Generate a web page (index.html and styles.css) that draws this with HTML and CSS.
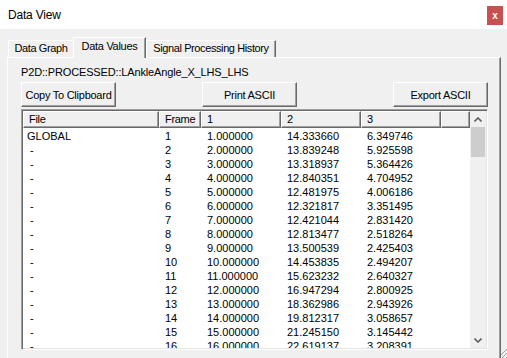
FILE: index.html
```html
<!DOCTYPE html>
<html lang="en">
<head>
    <meta charset="UTF-8">
    <title>Data View</title>
    <link rel="stylesheet" href="styles.css">
</head>
<body>
    <div class="window">
        <div class="titlebar">
            <span class="title">Data View</span>
            <span class="close">x</span>
        </div>
        <div class="client">
            <div class="tabs">
                <div class="tab tab-graph">Data Graph</div>
                <div class="tab tab-values active">Data Values</div>
                <div class="tab tab-history">Signal Processing History</div>
            </div>
            <div class="panel">
                <div class="channel">P2D::PROCESSED::LAnkleAngle_X_LHS_LHS</div>
                <div class="actions">
                    <button class="btn">Copy To Clipboard</button>
                    <button class="btn btn-print">Print ASCII</button>
                    <button class="btn btn-export">Export ASCII</button>
                </div>
                <div class="list">
                    <div class="list-main">
                        <div class="list-head">
                            <div class="head-cell">File</div>
                            <div class="head-cell">Frame</div>
                            <div class="head-cell">1</div>
                            <div class="head-cell">2</div>
                            <div class="head-cell">3</div>
                            <div class="head-cell"></div>
                        </div>
                        <div class="list-body">
                            <div class="row"><span class="cell cell-file">GLOBAL</span><span class="cell">1</span><span class="cell">1.000000</span><span class="cell">14.333660</span><span class="cell">6.349746</span></div>
                            <div class="row"><span class="cell cell-file">&nbsp;-</span><span class="cell">2</span><span class="cell">2.000000</span><span class="cell">13.839248</span><span class="cell">5.925598</span></div>
                            <div class="row"><span class="cell cell-file">&nbsp;-</span><span class="cell">3</span><span class="cell">3.000000</span><span class="cell">13.318937</span><span class="cell">5.364426</span></div>
                            <div class="row"><span class="cell cell-file">&nbsp;-</span><span class="cell">4</span><span class="cell">4.000000</span><span class="cell">12.840351</span><span class="cell">4.704952</span></div>
                            <div class="row"><span class="cell cell-file">&nbsp;-</span><span class="cell">5</span><span class="cell">5.000000</span><span class="cell">12.481975</span><span class="cell">4.006186</span></div>
                            <div class="row"><span class="cell cell-file">&nbsp;-</span><span class="cell">6</span><span class="cell">6.000000</span><span class="cell">12.321817</span><span class="cell">3.351495</span></div>
                            <div class="row"><span class="cell cell-file">&nbsp;-</span><span class="cell">7</span><span class="cell">7.000000</span><span class="cell">12.421044</span><span class="cell">2.831420</span></div>
                            <div class="row"><span class="cell cell-file">&nbsp;-</span><span class="cell">8</span><span class="cell">8.000000</span><span class="cell">12.813477</span><span class="cell">2.518264</span></div>
                            <div class="row"><span class="cell cell-file">&nbsp;-</span><span class="cell">9</span><span class="cell">9.000000</span><span class="cell">13.500539</span><span class="cell">2.425403</span></div>
                            <div class="row"><span class="cell cell-file">&nbsp;-</span><span class="cell">10</span><span class="cell">10.000000</span><span class="cell">14.453835</span><span class="cell">2.494207</span></div>
                            <div class="row"><span class="cell cell-file">&nbsp;-</span><span class="cell">11</span><span class="cell">11.000000</span><span class="cell">15.623232</span><span class="cell">2.640327</span></div>
                            <div class="row"><span class="cell cell-file">&nbsp;-</span><span class="cell">12</span><span class="cell">12.000000</span><span class="cell">16.947294</span><span class="cell">2.800925</span></div>
                            <div class="row"><span class="cell cell-file">&nbsp;-</span><span class="cell">13</span><span class="cell">13.000000</span><span class="cell">18.362986</span><span class="cell">2.943926</span></div>
                            <div class="row"><span class="cell cell-file">&nbsp;-</span><span class="cell">14</span><span class="cell">14.000000</span><span class="cell">19.812317</span><span class="cell">3.058657</span></div>
                            <div class="row"><span class="cell cell-file">&nbsp;-</span><span class="cell">15</span><span class="cell">15.000000</span><span class="cell">21.245150</span><span class="cell">3.145442</span></div>
                            <div class="row"><span class="cell cell-file">&nbsp;-</span><span class="cell">16</span><span class="cell">16.000000</span><span class="cell">22.619137</span><span class="cell">3.208391</span></div>
                        </div>
                    </div>
                    <div class="scrollbar">
                        <div class="sb-btn">
                            <svg width="8" height="5" viewBox="0 0 8 5"><path d="M0.5 4.5 L4 1 L7.5 4.5" fill="none" stroke="#606060" stroke-width="1.6"/></svg>
                        </div>
                        <div class="sb-thumb"></div>
                        <div class="sb-track"></div>
                        <div class="sb-btn">
                            <svg width="8" height="5" viewBox="0 0 8 5"><path d="M0.5 0.5 L4 4 L7.5 0.5" fill="none" stroke="#606060" stroke-width="1.6"/></svg>
                        </div>
                    </div>
                </div>
            </div>
        </div>
        <!-- size grip -->
        <svg class="grip" width="6" height="12" viewBox="0 0 6 12">
            <path d="M6 3 L0 9 M6 7 L1 12 M6 11 L5 12" stroke="#a0a0a0" stroke-width="1"/>
        </svg>
    </div>
</body>
</html>
```

FILE: styles.css
```css
body {
    margin: 0;
    font-family: "Liberation Sans", Arial, sans-serif;
    font-size: 11px;
    color: #000;
    background: #f0f0f0;
}

.window {
    width: 507px;
    height: 358px;
    display: flex;
    flex-direction: column;
    overflow: hidden;
    position: relative;
}

/* Title bar */
.titlebar {
    height: 29px;
    flex-shrink: 0;
    background: #fff;
    display: flex;
    align-items: center;
    justify-content: space-between;
    padding: 0 4px 0 8px;
    box-sizing: border-box;
}

.title {
    font-size: 12px;
    letter-spacing: -0.2px;
}

.close {
    width: 16px;
    height: 19px;
    margin-top: 1px;
    background: #c75050;
    color: #fff;
    font-weight: bold;
    font-size: 10px;
    display: flex;
    align-items: center;
    justify-content: center;
}

.client {
    flex: 1;
    padding: 8px 6px 0 7px;
}

/* Tabs */
.tabs {
    display: flex;
    align-items: flex-end;
    height: 20px;
    padding-left: 1px;
}

.tab {
    height: 17px;
    box-sizing: border-box;
    border-top: 1px solid #fff;
    border-left: 1px solid #fff;
    border-right: 1px solid #696969;
    box-shadow: inset -1px 0 #a0a0a0;
    text-align: center;
    line-height: 15px;
    letter-spacing: -0.4px;
    white-space: nowrap;
}

.tab-graph {
    width: 65px;
    border-right: 0;
    box-shadow: none;
}

.tab-values {
    width: 73px;
}

.tab-history {
    width: 130px;
}

.tab.active {
    height: 21px;
    margin-bottom: -1px;
    line-height: 17px;
    background: #f0f0f0;
    position: relative;
    z-index: 1;
    letter-spacing: -0.3px;
}

/* Tab page */
.panel {
    border-top: 1px solid #fff;
    border-left: 1px solid #fff;
    border-right: 1px solid #696969;
    box-shadow: inset -1px 0 #a0a0a0;
    padding: 7px 12px 20px 13px;
}

.channel {
    line-height: 14px;
    letter-spacing: -0.15px;
}

.actions {
    display: flex;
    margin-top: 3px;
}

.btn {
    width: 95px;
    height: 25px;
    padding: 0;
    font: inherit;
    color: #000;
    letter-spacing: -0.25px;
    background: #f0f0f0;
    border: 1px solid;
    border-color: #fff #696969 #696969 #fff;
    box-shadow: inset -1px -1px #a0a0a0;
}

.btn-print {
    margin-left: 86px;
}

.btn-export {
    margin-left: auto;
}

/* List view */
.list {
    margin-top: 2px;
    height: 241px;
    box-sizing: border-box;
    display: flex;
    background: #fff;
    border: 1px solid;
    border-color: #a0a0a0 #fff #fff #a0a0a0;
    box-shadow: inset 1px 1px #696969, inset -1px -1px #e3e3e3;
    padding: 1px;
}

.list-main {
    flex: 1;
    overflow: hidden;
}

.list-head,
.row {
    display: grid;
    grid-template-columns: 136px 42px 80px 80px 80px 1fr;
}

.list-head {
    height: 17px;
}

.head-cell {
    box-sizing: border-box;
    background: #f0f0f0;
    border-top: 1px solid #fff;
    border-left: 1px solid #fff;
    border-right: 1px solid #696969;
    border-bottom: 1px solid #696969;
    box-shadow: inset -1px -1px #a0a0a0;
    padding-left: 5px;
    line-height: 14px;
    letter-spacing: -0.3px;
    white-space: nowrap;
}

.list-body {
    padding-top: 1px;
}

.row {
    height: 14px;
    line-height: 14px;
    white-space: nowrap;
}

.cell {
    padding-left: 6px;
}

.cell-file {
    padding-left: 4px;
}

/* Scroll bar */
.scrollbar {
    width: 16px;
    background: #f0f0f0;
    display: flex;
    flex-direction: column;
}

.sb-btn {
    height: 16px;
    display: flex;
    align-items: center;
    justify-content: center;
}

.sb-thumb {
    height: 30px;
    margin: 0 1px;
    background: #cdcdcd;
}

.sb-track {
    flex: 1;
}

.grip {
    position: absolute;
    right: 0;
    bottom: 0;
}
```
